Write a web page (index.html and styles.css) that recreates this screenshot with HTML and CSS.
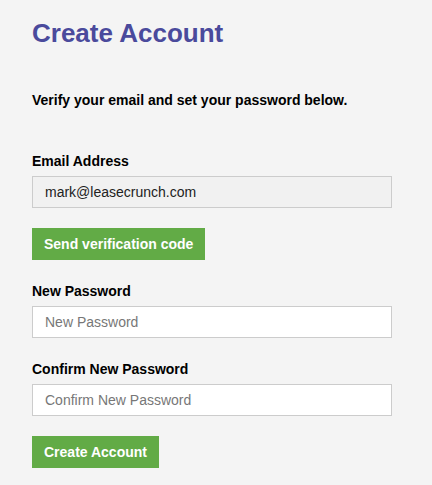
FILE: index.html
```html
<!DOCTYPE html>
<html lang="en">
<head>
  <meta charset="UTF-8">
  <title>Create Account</title>
  <meta name="viewport" content="width=device-width, initial-scale=1.0">
  <link rel="stylesheet" href="styles.css">
</head>
<body>

  <main class="signup">
    <h1>Create Account</h1>
    <p class="intro">Verify your email and set your password below.</p>

    <form class="signup-form" onsubmit="return false;">
      <div class="field">
        <label for="email">Email Address</label>
        <input type="email" id="email" value="mark@leasecrunch.com" disabled>
      </div>
      <button type="button" class="btn">Send verification code</button>

      <div class="field">
        <label for="password">New Password</label>
        <input type="password" id="password" placeholder="New Password">
      </div>

      <div class="field">
        <label for="confirm">Confirm New Password</label>
        <input type="password" id="confirm" placeholder="Confirm New Password">
      </div>
      <button type="submit" class="btn">Create Account</button>
    </form>
  </main>

</body>
</html>
```

FILE: styles.css
```css
* {
  box-sizing: border-box;
  margin: 0;
  padding: 0;
}

body {
  font-family: 'Liberation Sans', Arial, sans-serif;
  background-color: #f4f4f4;
  color: #000;
}

.signup {
  padding: 17px 40px 0 32px;
}

.signup h1 {
  font-size: 26px;
  font-weight: bold;
  color: #4a4a9c;
  line-height: 32px;
}

.intro {
  font-size: 14px;
  font-weight: bold;
  margin-top: 43px;
  line-height: 16px;
}

.signup-form {
  display: flex;
  flex-direction: column;
  align-items: flex-start;
  margin-top: 45px;
}

.field {
  width: 100%;
  display: flex;
  flex-direction: column;
}

.field + .field {
  margin-top: 23px;
}

.field label {
  font-size: 14px;
  font-weight: bold;
  line-height: 16px;
  margin-bottom: 7px;
}

.field input {
  width: 360px;
  height: 32px;
  padding: 0 12px;
  font-family: inherit;
  font-size: 14px;
  color: #222;
  background-color: #fff;
  border: 1px solid #ccc;
  outline: none;
}

.field input:disabled {
  background-color: #f1f1f1;
}

.field input::placeholder {
  color: #777;
}

.btn {
  margin: 20px 0 23px;
  height: 32px;
  padding: 0 12px;
  font-family: inherit;
  font-size: 14px;
  font-weight: bold;
  color: #fff;
  background-color: #62ab46;
  border: none;
  cursor: pointer;
}
```
